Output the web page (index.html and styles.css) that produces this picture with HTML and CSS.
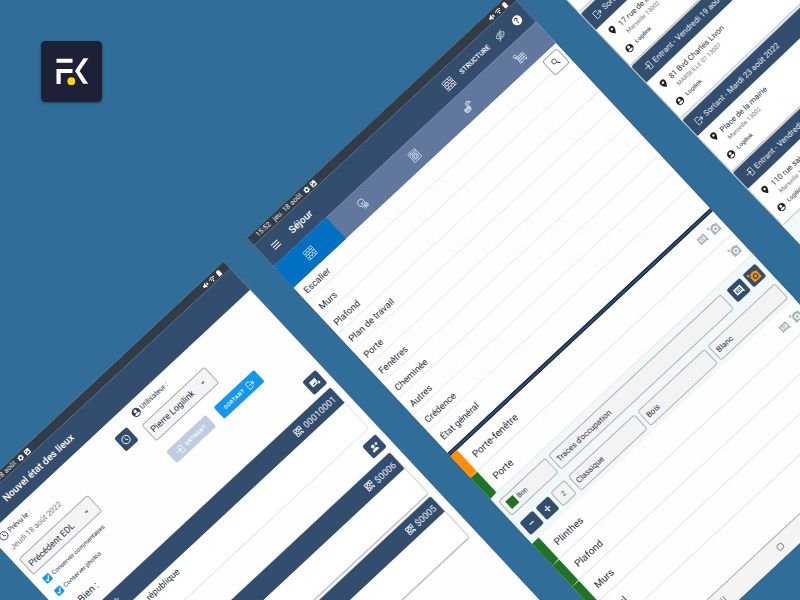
FILE: index.html
```html
<!DOCTYPE html>
<html lang="fr">
<head>
<meta charset="utf-8">
<title>Logilink</title>
<link rel="stylesheet" href="styles.css">
</head>
<body>
<svg class="defs" width="0" height="0">
  <symbol id="gear" viewBox="0 0 24 24"><path fill="currentColor" fill-rule="evenodd" d="M9.5 1h5l.6 3.4 1.8 1 3.2-1.2 2.500 4.300-2.600 2.200v2.600l2.600 2.200-2.500 4.300-3.200-1.200-1.800 1-.6 3.400h-5l-.6-3.400-1.800-1-3.200 1.200-2.500-4.300L4 13.300v-2.600L1.400 8.500l2.500-4.300 3.200 1.200 1.800-1zM12 8a4 4 0 1 0 0 8 4 4 0 0 0 0-8z"/></symbol>
  <symbol id="photo" viewBox="0 0 24 24"><path fill="currentColor" fill-rule="evenodd" d="M2 4l3-2h15l2 2v17l-2 1H4l-2-1zM5 18h14l-5-8-4 5-2-2zM6 5v4h5V5z"/></symbol>
  <symbol id="mute" viewBox="0 0 24 24"><path fill="currentColor" d="M2 8h5l7-6v20l-7-6H2z"/><path stroke="currentColor" stroke-width="3" d="M17 8l5 8M22 8l-5 8"/></symbol>
  <symbol id="wifi" viewBox="0 0 24 24"><path fill="none" stroke="currentColor" stroke-width="3" d="M1 9q11-9 22 0M6 14q6-5 12 0"/><circle cx="12" cy="19" r="3" fill="currentColor"/></symbol>
  <symbol id="battery" viewBox="0 0 24 24"><path fill="currentColor" d="M9 1h6v3h4v19H5V4h4z"/></symbol>
  <symbol id="wall" viewBox="0 0 24 24"><path fill="none" stroke="currentColor" stroke-width="1.600" d="M1 2h22v20H1zM1 7h22M1 12h22M1 17h22M8 2v5M16 2v5M5 7v5M12 7v5M19 7v5M8 12v5M16 12v5M5 17v5M12 17v5M19 17v5"/></symbol>
  <symbol id="bulb" viewBox="0 0 24 24"><path fill="none" stroke="currentColor" stroke-width="1.700" d="M8 17c0-3-4-4-4-9a7 7 0 0 1 14 0c0 2-1 4-2 5M8 17h4M8 20h4M9 23h3M11 16v-5l-2-2M11 11l3-2"/><circle cx="16" cy="18" r="4" fill="none" stroke="currentColor" stroke-width="1.700"/><path stroke="currentColor" stroke-width="1.700" d="M14.500 16v4M17.500 16v4M13 18h6"/></symbol>
  <symbol id="washer" viewBox="0 0 24 24"><path fill="none" stroke="currentColor" stroke-width="1.700" d="M3 1h18v22H3zM3 6h18M6 3.500h5M16 3.500h2"/><circle cx="12" cy="14" r="6" fill="none" stroke="currentColor" stroke-width="1.700"/><circle cx="12" cy="14" r="3" fill="none" stroke="currentColor" stroke-width="1.700"/></symbol>
  <symbol id="tap" viewBox="0 0 24 24"><path fill="none" stroke="currentColor" stroke-width="1.900" d="M2 14h13v3a5 5 0 0 1-5 5H7a5 5 0 0 1-5-5zM5 14v5M8.500 14v6M12 14v5M2 17h13M12 14V9c0-6 9-6 9 0M14.500 12c0-4 4-4 4-2M18 9h5"/></symbol>
  <symbol id="cart" viewBox="0 0 24 24"><path fill="none" stroke="currentColor" stroke-width="1.700" d="M6 8h17v9H6zM6 12h17M10 8v9M14 8v9M18 8v9M6 17l-2 4h19M2 7h4v10"/><circle cx="5" cy="4" r="3" fill="none" stroke="currentColor" stroke-width="1.700"/><circle cx="8" cy="22" r="1.500" fill="currentColor"/><circle cx="20" cy="22" r="1.500" fill="currentColor"/></symbol>
  <symbol id="eyeoff" viewBox="0 0 24 24"><path fill="none" stroke="currentColor" stroke-width="1.500" d="M1 12q11-14 22 0-11 14-22 0zM3 22L20 2"/><circle cx="12" cy="12" r="4" fill="none" stroke="currentColor" stroke-width="1.500"/></symbol>
  <symbol id="menu" viewBox="0 0 24 24"><path stroke="currentColor" stroke-width="2.500" d="M1 5h22M1 12h22M1 19h22"/></symbol>
  <symbol id="search" viewBox="0 0 24 24"><circle cx="10" cy="8.500" r="6" fill="none" stroke="currentColor" stroke-width="2.200"/><path stroke="currentColor" stroke-width="2.800" d="M13.500 13.500l6.500 8"/></symbol>
  <symbol id="chat" viewBox="0 0 24 24"><path fill="currentColor" fill-rule="evenodd" d="M1 2h22v21l-4-4H1zM5 6v9h14V6z"/><path fill="currentColor" d="M7 7.500h10v2H7zM7 11.500h10v2H7z"/></symbol>
  <symbol id="camera" viewBox="0 0 24 24"><path fill="currentColor" fill-rule="evenodd" d="M4 8h3V4h3l1-1h6l2 2h4v17H4zM14 8a5.500 5.500 0 1 0 0 11 5.500 5.500 0 0 0 0-11zm0 2.500a3 3 0 1 1 0 6 3 3 0 0 1 0-6z"/><path stroke="currentColor" stroke-width="2.200" d="M3 0v7M0 3.500h6"/></symbol>
  <symbol id="clock" viewBox="0 0 24 24"><circle cx="12" cy="12" r="10" fill="none" stroke="currentColor" stroke-width="2.200"/><path fill="none" stroke="currentColor" stroke-width="2.200" d="M12 6v6.500l4.500 2.500"/></symbol>
  <symbol id="user" viewBox="0 0 24 24"><path fill="currentColor" fill-rule="evenodd" d="M12 1a11 11 0 1 0 0 22 11 11 0 0 0 0-22zm0 3.500a4 4 0 1 1 0 8 4 4 0 0 1 0-8zM5 17c1-4 13-4 14 0-3 4.500-11 4.500-14 0z"/></symbol>
  <symbol id="pin" viewBox="0 0 24 24"><path fill="currentColor" fill-rule="evenodd" d="M12 1a8 8 0 0 0-8 8c0 6 8 14.500 8 14.500S20 15 20 9a8 8 0 0 0-8-8zm0 5a3 3 0 1 1 0 6 3 3 0 0 1 0-6z"/></symbol>
  <symbol id="out" viewBox="0 0 24 24"><path fill="none" stroke="currentColor" stroke-width="2.400" d="M13 7V2H2v20h11v-5M8 12h14M17.500 7l5 5-5 5"/></symbol>
  <symbol id="in" viewBox="0 0 24 24"><path fill="none" stroke="currentColor" stroke-width="2.400" d="M11 6V2h11v20H11v-4M1 12h14M10.500 7l5 5-5 5"/></symbol>
  <symbol id="addpic" viewBox="0 0 24 24"><path fill="currentColor" fill-rule="evenodd" d="M1 3h18v10h-3v5H1zM4 15h10l-3-5-3 3-1.500-1z"/><path stroke="currentColor" stroke-width="2.500" d="M20 14v8M16 18h8"/></symbol>
  <symbol id="adduser" viewBox="0 0 24 24"><circle cx="9" cy="8" r="4.500" fill="currentColor"/><path fill="currentColor" d="M0 21c0-9 18-9 18 0z"/><path stroke="currentColor" stroke-width="2.500" d="M19.500 4v8M15.500 8h8"/></symbol>
  <symbol id="qr" viewBox="0 0 24 24"><path fill="none" stroke="currentColor" stroke-width="2.600" d="M2 2h7v7H2zM15 2h7v7h-7zM2 15h7v7H2zM12 1v6M11 12h5M1 12h5M19 12h4M13 15v8M17 15v4h5M17 22h5"/></symbol>
</svg>

<svg class="logo" viewBox="0 0 61 61">
  <path fill="#fff" d="M15.500 17.700h16v4h-16zM15.500 28h16v3.900H19.700V43h-4.200zM42.500 17.200h5L38.600 29.900l8.600 12.800h-5L34 29.900z"/>
  <circle cx="30.300" cy="40.200" r="3.900" fill="#ffd506"/>
</svg>

<section class="screen screen-form">
  <div class="status"><span class="time">15:52</span><span class="date">jeu. 18 août</span><svg><use href="#gear"/></svg><svg><use href="#photo"/></svg><i class="grow"></i><svg><use href="#mute"/></svg><svg><use href="#wifi"/></svg><svg><use href="#battery"/></svg></div>
  <header class="bar"><svg class="burger"><use href="#menu"/></svg><h1>Nouvel état des lieux</h1></header>
  <div class="form">
    <div class="col-when">
      <div class="label"><svg><use href="#clock"/></svg>Prévu le :</div>
      <div class="day">Jeudi 18 août 2022</div>
      <div class="select">Précédent EDL<i class="arrow"></i></div>
      <div class="check"><svg viewBox="0 0 8 8"><path d="M1.500 4.200l1.800 1.800 3.300-4"/></svg>Conserver commentaires</div>
      <div class="check"><svg viewBox="0 0 8 8"><path d="M1.500 4.200l1.800 1.800 3.300-4"/></svg>Conserver photos</div>
      <div class="bien">Bien :</div>
    </div>
    <div class="square now"><svg><use href="#clock"/></svg></div>
    <div class="col-user">
      <div class="label"><svg><use href="#user"/></svg>Utilisateur :</div>
      <div class="select">Pierre Logilink<i class="arrow"></i></div>
      <div class="actions">
        <div class="btn muted"><svg><use href="#in"/></svg>ENTRANT</div>
        <div class="btn">SORTANT<svg><use href="#out"/></svg></div>
      </div>
    </div>
    <div class="square add"><svg><use href="#addpic"/></svg></div>
  </div>
  <article class="card first"><div class="card-head"><span>Logilink</span><i class="grow"></i><svg><use href="#qr"/></svg><b>00010001</b></div><p>18 rue de la république</p></article>
  <div class="square addu"><svg><use href="#adduser"/></svg></div>
  <article class="card second"><div class="card-head"><i class="grow"></i><svg><use href="#qr"/></svg><b>$0006</b></div></article>
  <article class="card third"><div class="card-head"><i class="grow"></i><svg><use href="#qr"/></svg><b>$0005</b></div></article>
</section>

<section class="screen screen-room">
  <div class="status"><span class="time">15:52</span><span class="date">jeu. 18 août</span><svg><use href="#gear"/></svg><svg><use href="#photo"/></svg><i class="grow"></i><svg><use href="#mute"/></svg><svg><use href="#wifi"/></svg><svg><use href="#battery"/></svg></div>
  <header class="bar"><svg class="burger"><use href="#menu"/></svg><h1>Séjour</h1><i class="grow"></i><svg class="i12"><use href="#wall"/></svg><span class="mode">STRUCTURE</span><svg class="i11 eye"><use href="#eyeoff"/></svg><span class="help">?</span></header>
  <nav class="tabs"><div class="on"><svg><use href="#wall"/></svg></div><div><svg><use href="#bulb"/></svg></div><div><svg><use href="#washer"/></svg></div><div><svg><use href="#tap"/></svg></div><div><svg><use href="#cart"/></svg></div></nav>
  <div class="find"><svg><use href="#search"/></svg></div>
  <ul class="list">
    <li>Escalier</li><li>Murs</li><li>Plafond</li><li>Plan de travail</li><li>Porte</li><li>Fenêtres</li><li>Cheminée</li><li>Autres</li><li>Crédence</li><li>État général</li>
  </ul>
  <div class="divider"></div>
  <div class="item warn"><span>Porte-fenêtre</span><i class="grow"></i><svg><use href="#chat"/></svg><svg class="cam"><use href="#camera"/></svg></div>
  <div class="item"><span>Porte</span><i class="grow"></i><svg class="cam"><use href="#camera"/></svg></div>
  <div class="panel">
    <div class="line">
      <div class="field state"><i class="swatch"></i>Bon</div>
      <div class="field obs">Traces d'occupation</div>
      <div class="square"><svg><use href="#chat"/></svg></div>
      <div class="square orange"><svg><use href="#camera"/></svg></div>
    </div>
    <div class="line">
      <div class="square sign">−</div><div class="square sign">+</div><div class="field qty">2</div>
      <div class="field attr">Classique</div><div class="field attr">Bois</div><div class="field attr">Blanc</div>
    </div>
  </div>
  <div class="item"><span>Plinthes</span><i class="grow"></i><svg><use href="#chat"/></svg><svg class="cam"><use href="#camera"/></svg></div>
  <div class="item"><span>Plafond</span></div>
  <div class="item"><span>Murs</span></div>
  <div class="item"><span>Sol</span></div>
  <div class="rest"></div>
  <footer class="keys"><i class="recent"></i><i class="home"></i></footer>
</section>

<section class="screen screen-agenda">
  <article class="visit"><h2><svg><use href="#in"/></svg>Entrant - Jeudi 18 août 2022</h2><div class="row"><svg><use href="#pin"/></svg><p>5 rue Paradis<small>Marseille 13001</small></p></div><div class="row who"><svg><use href="#user"/></svg>Logilink</div></article>
  <article class="visit"><h2><svg><use href="#out"/></svg>Sortant - Jeudi 18 août 2022</h2><div class="row"><svg><use href="#pin"/></svg><p>17 rue de la république<small>Marseille 13002</small></p></div><div class="row who"><svg><use href="#user"/></svg>Logilink</div></article>
  <article class="visit"><h2><svg><use href="#in"/></svg>Entrant - Vendredi 19 août 2022</h2><div class="row"><svg><use href="#pin"/></svg><p>81 Bvd Charles Livon<small>MARSEILLE 07 13007</small></p></div><div class="row who"><svg><use href="#user"/></svg>Logilink</div></article>
  <article class="visit"><h2><svg><use href="#out"/></svg>Sortant - Mardi 23 août 2022</h2><div class="row"><svg><use href="#pin"/></svg><p>Place de la mairie<small>Marseille 13002</small></p></div><div class="row who"><svg><use href="#user"/></svg>Logilink</div></article>
  <article class="visit"><h2><svg><use href="#in"/></svg>Entrant - Vendredi 26 août 2022</h2><div class="row"><svg><use href="#pin"/></svg><p>110 rue sainte<small>Marseille 13007</small></p></div><div class="row who"><svg><use href="#user"/></svg>Logilink</div></article>
</section>
</body>
</html>
```
FILE: styles.css
```css
* { box-sizing: border-box; }
body {
  margin: 0;
  width: 800px;
  height: 600px;
  overflow: hidden;
  position: relative;
  background: #306d99;
  font-family: Roboto, "Liberation Sans", sans-serif;
  color: #25313e;
}
h1, h2, p, ul { margin: 0; padding: 0; font-weight: 400; }
.defs { position: absolute; }
svg { flex: none; display: block; }
.grow { flex: 1; }

.logo {
  position: absolute;
  left: 40.5px;
  top: 41px;
  width: 61px;
  height: 61px;
  border-radius: 4.500px;
  background: #1d2138;
  box-shadow: 0 1px 3px rgba(0, 0, 0, .4);
}

/* The three tilted device screens */
.screen {
  position: absolute;
  width: 359px;
  transform-origin: 0 0;
  transform: rotate(-43deg);
  background: #fefefe;
  display: flex;
  flex-direction: column;
}
.screen-form { left: -38.6px; top: 505.8px; height: 600px; }
.screen-room { left: 247px; top: 237.5px; height: 600px; box-shadow: 0 0 1px rgba(0, 0, 0, .5); }
.screen-agenda {
  left: 528.7px;
  top: -39px;
  height: 600px;
  transform: rotate(-43.700deg);
  background: #f1f9fa;
  gap: 2.400px;
  padding: 0 1px;
}

.status {
  flex: none;
  height: 10.300px;
  padding: 0 6px 0 9px;
  display: flex;
  align-items: center;
  background: #303c47;
  color: #e9edf0;
  font-size: 7px;
  letter-spacing: .1px;
}
.status .time { width: 23px; }
.status .date { width: 41px; white-space: nowrap; }
.status svg { width: 7px; height: 7px; margin-right: 2px; color: #fff; }
.bar {
  flex: none;
  height: 29px;
  padding: 0 8.500px 0 12px;
  display: flex;
  align-items: center;
  background: #334d6e;
  color: #fff;
}
.burger { width: 9.500px; height: 9.500px; margin-right: 14.500px; }
.bar h1 { font-size: 10px; font-weight: 500; white-space: nowrap; }
.i12 { width: 12px; height: 12px; }
.mode { font-size: 7px; font-weight: 500; margin-left: 9.500px; }
.i11 { width: 11px; height: 11px; }
.eye { margin: 0 11.500px 0 10px; color: #dfe6ee; }
.help { width: 10px; height: 10px; border-radius: 5px; background: #fff; color: #334d6e; font-size: 8.500px; font-weight: 700; line-height: 10px; text-align: center; }

.tabs { flex: none; height: 29.200px; display: flex; background: #62779e; color: #dfe6f2; position: relative; z-index: 1; }
.tabs div { flex: 1; display: flex; align-items: center; justify-content: center; }
.tabs .on { background: #0070c3; }
.tabs svg { width: 12px; height: 12px; }

.find {
  position: absolute;
  right: 3px;
  top: 71.700px;
  width: 20.500px;
  height: 20.500px;
  border: 1px solid #a2a7ac;
  border-radius: 3px;
  background: #fff;
  display: flex;
  align-items: center;
  justify-content: center;
  z-index: 1;
}
.find svg { width: 9.500px; height: 9.500px; color: #444; }

.list { flex: none; height: 225.500px; margin-top: -2.300px; list-style: none; position: relative; z-index: 0; }
.list li { height: 22.150px; padding: 3px 0 0 6px; display: flex; align-items: center; font-size: 9.300px; border-bottom: 1px solid #ececec; }
.list li:last-child { border: 0; }
.divider { flex: none; height: 4.500px; margin-top: 2px; background: #334d6e; border: 1px solid #16243a; border-width: 1px 0; }

.item {
  flex: none;
  height: 29.350px;
  padding: 0 5px 0 8.500px;
  border-left: 9.500px solid #1e7424;
  border-bottom: 1px solid #e2e4e6;
  display: flex;
  align-items: center;
  font-size: 10px;
}
.item span { padding-top: 3px; }
.item.warn { border-left-color: #ff8f00; }
.item svg { width: 10.500px; height: 10.500px; color: #a9b5bd; margin-left: 5px; }
.item .cam { width: 12px; height: 12px; }

.panel { flex: none; height: 61.300px; background: #f0f8fa; padding: 6.700px 4px 5px; display: flex; flex-direction: column; gap: 8.700px; }
.line { display: flex; align-items: center; gap: 4px; height: 20.300px; }
.field { height: 20.300px; border: 1px solid #adb2b6; border-radius: 2.500px; background: #f3f3f4; padding: 1px 3px 0; display: flex; align-items: center; font-size: 8px; white-space: nowrap; }
.state { width: 63.500px; padding-left: 4px; font-size: 7px; gap: 3px; margin-right: .5px; }
.swatch { width: 9.500px; height: 9.500px; background: #1e7424; }
.obs { width: 236px; }
.square { flex: none; width: 17.500px; height: 17.500px; border-radius: 2px; background: #334d6e; color: #fff; display: flex; align-items: center; justify-content: center; }
.square svg { width: 10px; height: 10px; }
.line .square { margin-left: 3px; }
.line .square + .square { margin-left: 0; }
.orange { color: #ff9100; }
.orange svg { width: 12px; height: 12px; }
.line .sign { font-size: 13px; margin-left: 1px; }
.line .sign + .sign { margin-left: 0; }
.qty { width: 18.500px; height: 18.500px; font-size: 7px; justify-content: center; margin-right: 1px; color: #555; }
.attr { flex: 1; }
.rest { flex: 1; }
.keys { flex: none; height: 22px; background: #f4f4f5; border-top: 1px solid #aaa; position: relative; display: flex; align-items: center; }
.recent { width: 7px; height: 7px; margin-left: 97px; border: 1px solid #888; border-width: 0 1px; background: linear-gradient(90deg, transparent 2px, #888 2px, #888 3px, transparent 3px); }
.home { width: 7px; height: 7px; margin-left: 72px; border: 1.200px solid #888; border-radius: 2.500px; }

/* Inspection form */
.form { flex: none; height: 125.700px; display: flex; padding-left: 6px; }
.col-when { width: 151.500px; padding-top: 5.700px; white-space: nowrap; }
.label { height: 12px; display: flex; align-items: center; gap: 2px; font-size: 7.200px; }
.label svg { width: 10px; height: 10px; color: #2c4258; }
.day { height: 12px; line-height: 12px; margin: 3px 0 6.500px 2px; font-size: 7.800px; color: #777; }
.select { height: 21.500px; border: 1px solid #a8acb0; border-radius: 2.500px; background: #f4f4f5; padding: 1px 9px 0 3.500px; display: flex; align-items: center; justify-content: space-between; font-size: 9px; white-space: nowrap; }
.col-when .select { width: 93.500px; }
.arrow { border: 2px solid transparent; border-top: 2.500px solid #444; border-bottom: 0; }
.check { height: 12px; margin-top: 6.500px; padding-left: 4px; display: flex; align-items: center; gap: 3px; font-size: 6.250px; }
.check + .check { margin-top: 4.300px; }
.check svg { width: 8px; height: 8px; border-radius: 1px; background: #1296f0; }
.check path { fill: none; stroke: #fff; stroke-width: 1.200; }
.bien { margin: 9px 0 0 16px; font-size: 10px; line-height: 12px; }
.now { margin-top: 16px; }
.col-user { margin-left: 11.500px; width: 121px; padding-top: 5.700px; }
.col-user .select { width: 86px; margin-top: 7.200px; }
.actions { display: flex; gap: 11px; margin-top: 14.500px; }
.btn { width: 54.500px; height: 16px; border-radius: 2px; background: #1296f0; color: #fff; font-size: 5.400px; font-weight: 500; letter-spacing: .4px; display: flex; align-items: center; justify-content: center; gap: 4px; white-space: nowrap; }
.btn.muted { background: #c0cde0; }
.btn svg { width: 9px; height: 9px; }
.add { margin: 103px 0 0 26.500px; }

.card { flex: none; background: #fff; margin: 0 9px; box-shadow: 0 .5px 2px rgba(0, 0, 0, .55); border-radius: 2px; }
.card-head { height: 21.300px; padding: 0 4px; display: flex; align-items: center; gap: 3px; background: #334d6e; color: #e8edf3; border-radius: 2px 2px 0 0; font-size: 9.200px; }
.card-head b { font-weight: 400; }
.card-head svg { width: 9.500px; height: 9.500px; }
.card-head span { padding-left: 9px; }
.card p { width: 107px; padding-top: 4px; font-size: 9px; text-align: right; white-space: nowrap; }
.first { height: 56px; margin: 0 8px; box-shadow: 0 0 1px rgba(0, 0, 0, .4); }
.addu { margin: 9px 0 0 334px; }
.second { height: 56px; margin-top: 6px; }
.third { height: 56px; margin-top: 3.300px; }

/* Agenda */
.visit { flex: none; height: 71.200px; background: #fff; border-radius: 2px; box-shadow: 0 0 1.500px rgba(0, 0, 0, .7); white-space: nowrap; }
.visit h2 { height: 22px; padding: 1px 0 0 7.500px; display: flex; align-items: center; gap: 3.500px; background: #334d6e; color: #e8edf3; border-radius: 2px 2px 0 0; font-size: 8px; }
.visit h2 svg { width: 9px; height: 9px; }
.row { height: 29px; padding: 7.500px 0 0 7px; display: flex; align-items: flex-start; gap: 4px; }
.row svg { width: 9.500px; height: 9.500px; color: #222; }
.row p { font-size: 7.900px; line-height: 10px; padding-top: .7px; }
.row small { display: block; font-size: 6.100px; line-height: 10px; color: #777; padding-left: .5px; }
.who { height: 14px; padding-top: 3px; font-size: 5.900px; line-height: 9px; }
.who svg { width: 9px; height: 9px; margin-right: .5px; }
```
